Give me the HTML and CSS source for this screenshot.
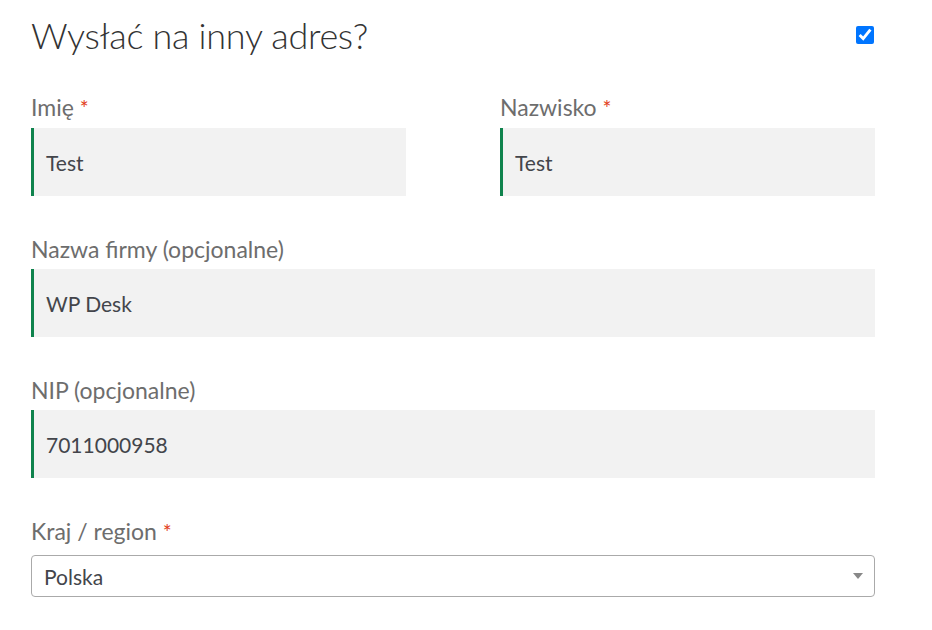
FILE: index.html
```html
<!DOCTYPE html>
<html lang="pl">
<head>
<meta charset="utf-8">
<title>Wysłać na inny adres?</title>
<link rel="stylesheet" href="styles.css">
</head>
<body>
<div class="form">
  <div class="heading-row">
    <h3 class="heading">Wysłać na inny adres?</h3>
    <input class="ship-check" type="checkbox" checked aria-label="Wysłać na inny adres?">
  </div>
  <div class="grid">
    <div class="field">
      <label class="label">Imię <span class="req">*</span></label>
      <div class="input">Test</div>
    </div>
    <div class="field">
      <label class="label">Nazwisko <span class="req">*</span></label>
      <div class="input">Test</div>
    </div>
    <div class="field wide">
      <label class="label">Nazwa firmy (opcjonalne)</label>
      <div class="input">WP Desk</div>
    </div>
    <div class="field wide">
      <label class="label">NIP (opcjonalne)</label>
      <div class="input">7011000958</div>
    </div>
    <div class="field wide">
      <label class="label select-label">Kraj / region <span class="req">*</span></label>
      <div class="select">
        <span class="select-value">Polska</span>
        <span class="arrow"></span>
      </div>
    </div>
  </div>
</div>
</body>
</html>
```

FILE: styles.css
```css
html, body {
  margin: 0;
  padding: 0;
  background: #ffffff;
}
body {
  font-family: "Lato", "Liberation Sans", sans-serif;
  color: #6d6d6d;
}
.form {
  width: 844px;
  margin-left: 31px;
}
.heading-row {
  display: flex;
  justify-content: space-between;
  align-items: center;
  padding-top: 11px;
  height: 48px;
}
.heading {
  margin: 0;
  font-size: 36px;
  font-weight: 300;
  line-height: 48px;
  color: #333333;
  letter-spacing: -0.3px;
}
.ship-check {
  width: 18px;
  height: 18px;
  margin: 0 1px 0 0;
  accent-color: #0075ff;
}
.grid {
  margin-top: 33px;
  display: grid;
  grid-template-columns: 375px 375px;
  column-gap: 94px;
}
.field {
  display: flex;
  flex-direction: column;
  margin-bottom: 38px;
}
.wide {
  grid-column: 1 / -1;
}
.label {
  font-size: 23px;
  line-height: 30px;
  margin-bottom: 5px;
  color: #6d6d6d;
}
.req {
  color: #e2401c;
  font-weight: 400;
  font-size: 21px;
}
.input {
  height: 68px;
  box-sizing: border-box;
  background: #f2f2f2;
  border-left: 3px solid #0f834d;
  padding-left: 12px;
  display: flex;
  align-items: center;
  font-size: 21px;
  color: #43454b;
}
.select-label {
  margin-bottom: 8px;
}
.select {
  height: 42px;
  box-sizing: border-box;
  border: 1px solid #aaaaaa;
  border-radius: 4px;
  padding: 0 12px;
  display: flex;
  align-items: center;
  justify-content: space-between;
  font-size: 21px;
  color: #43454b;
}
.arrow {
  width: 0;
  height: 0;
  border-left: 5px solid transparent;
  border-right: 5px solid transparent;
  border-top: 6px solid #888888;
  margin-right: -1px;
}
```
